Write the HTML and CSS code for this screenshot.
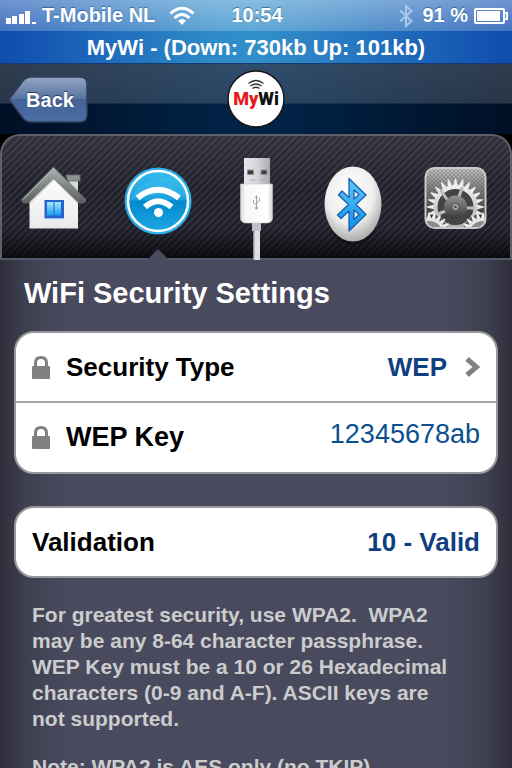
FILE: index.html
```html
<!DOCTYPE html>
<html lang="en">
<head>
<meta charset="utf-8">
<meta name="viewport" content="width=device-width, initial-scale=1">
<title>MyWi</title>
<link rel="stylesheet" href="styles.css">
</head>
<body>
<div class="app">
  <div class="system">
    <div class="status">
      <div class="status-side">
        <svg width="30" height="16" viewBox="0 0 30 16" fill="#fff" aria-hidden="true"><path d="M0 10h5v6H0zM6 8h5v8H6zM13 6h5v10h-5zM19 3h5v13h-5zM26 14h4v2h-4z"/></svg>
        <span>T-Mobile NL</span>
        <svg class="wifi" width="26" height="20" viewBox="0 0 26 20" aria-hidden="true"><g fill="none" stroke="#fff" stroke-width="3"><path d="M1.500 7.500Q13-3 24.500 7.500"/><path d="M5.500 12Q13 5 20.500 12"/></g><path d="M9 14.500q4-3 8 0L13 19z" fill="#fff"/></svg>
      </div>
      <span>10:54</span>
      <div class="status-side status-right">
        <svg class="bt" width="16" height="24" viewBox="0 0 16 24" fill="none" stroke="#a9c8ea" stroke-width="2" aria-hidden="true"><path d="M2 6.500L13.500 17 8 22V2l5.500 5L2 17.500"/></svg>
        <span>91 %</span>
        <svg width="34" height="16" viewBox="0 0 34 16" aria-hidden="true"><rect x="1" y="1" width="29" height="14" rx="1" fill="none" stroke="#fff" stroke-width="2"/><path d="M3 3h23v10H3z" fill="#fff"/><path d="M31 5h2v6h-2" fill="none" stroke="#fff" stroke-width="2"/></svg>
      </div>
    </div>
    <div class="traffic">MyWi - (Down: 730kb Up: 101kb)</div>
  </div>

  <header class="nav">
    <button class="back" type="button">
      <svg class="back-shape" viewBox="0 0 80 47" preserveAspectRatio="none" aria-hidden="true">
        <defs><linearGradient id="backFill" x2="0" y2="1"><stop offset="0" stop-color="#94a5c2"/><stop offset=".48" stop-color="#5874a2"/><stop offset=".5" stop-color="#436296"/><stop offset="1" stop-color="#4b6fa5"/></linearGradient></defs>
        <path d="M1 23.500L15 5Q18.500 1 23 1h49q7 0 7 7v31q0 7-7 7H23q-4.500 0-8-4z" fill="url(#backFill)" stroke="#2e405e" stroke-width="1.500"/>
      </svg>
      <span>Back</span>
    </button>
    <svg class="logo" width="58" height="58" viewBox="0 0 58 58" role="img" aria-label="MyWi">
      <circle cx="29" cy="29" r="28" fill="#fff" stroke="#171717" stroke-width="1.500"/>
      <g fill="none" stroke="#333" stroke-width="1.300"><path d="M21.500 13.500q7.500-6 15 0"/><path d="M23.500 16q5.500-4 11 0"/><path d="M25.500 18.500q3.500-2.500 7 0"/></g>
      <text x="29" y="35" text-anchor="middle" class="logo-text"><tspan fill="#e31b23">My</tspan><tspan fill="#111">Wi</tspan></text>
    </svg>
  </header>

  <nav class="tabs">
    <button class="tab" type="button" aria-label="Home">
      <svg width="68" height="124" viewBox="20 136 68 124">
        <defs>
          <linearGradient id="wall" x2="0" y2="1"><stop offset="0" stop-color="#fff"/><stop offset="1" stop-color="#e9eae9"/></linearGradient>
          <linearGradient id="pane" x2="0" y2="1"><stop offset="0" stop-color="#a6e8ff"/><stop offset="1" stop-color="#159de8"/></linearGradient>
          <linearGradient id="roof" x2="0" y2="1"><stop offset="0" stop-color="#aeb2b0"/><stop offset="1" stop-color="#5b605e"/></linearGradient>
        </defs>
        <path d="M69 179h9v18l-9-9z" fill="#d8dbda"/>
        <path d="M66 175h14v6H68z" fill="#8d9290" stroke="#6d716f"/>
        <path d="M29.500 199L54 174l24 25v29.500H29.500z" fill="url(#wall)"/>
        <path d="M29.500 199L54 176l24 23v5L54 180l-24.500 24z" fill="#b9bbba" opacity=".7"/>
        <path d="M53.500 167L21.500 199.500q0 3.500 3 3.500h3.500L53.500 178 79 203h4q3 0 3-3.500z" fill="url(#roof)" stroke="#5d615f" stroke-width=".8"/>
        <path d="M53.500 168.500L23 199.500" fill="none" stroke="#c2c5c3"/>
        <path d="M44.500 200h19.500v18.500H44.500z" fill="#2862cf"/>
        <path d="M47 202h6.500v13.500H47zM54.500 202h6.500v13.500h-6.500z" fill="url(#pane)"/>
        <path d="M44 219h20.500" stroke="#b8e2f7"/>
      </svg>
    </button>
    <button class="tab tab-active" type="button" aria-label="WiFi" aria-current="page">
      <svg width="68" height="124" viewBox="125 136 68 124">
        <defs><linearGradient id="disc" x2="0" y2="1"><stop offset="0" stop-color="#32bdef"/><stop offset=".48" stop-color="#1a9fdb"/><stop offset=".5" stop-color="#0488cd"/><stop offset="1" stop-color="#1ca9e3"/></linearGradient></defs>
        <circle cx="159" cy="201" r="33.500" fill="#2caee8"/>
        <circle cx="159" cy="201" r="30" fill="url(#disc)" stroke="#fff" stroke-width="2.500"/>
        <path d="M131 199q12-22 44-22 10 5 13 20-26-6-57 2z" fill="#55cdf5" opacity=".25"/>
        <g fill="none" stroke="#fff" stroke-width="6"><path d="M138.500 198q20.500-16.500 41.500 0"/><path d="M146 207q13-11.500 26.500 0"/></g>
        <circle cx="159.500" cy="212.500" r="4.500" fill="#fff"/>
      </svg>
    </button>
    <button class="tab" type="button" aria-label="USB">
      <svg width="36" height="124" viewBox="239 136 36 124">
        <defs><linearGradient id="metal"><stop offset="0" stop-color="#e9e9ec"/><stop offset=".5" stop-color="#d4d4d9"/><stop offset="1" stop-color="#a8a9b2"/></linearGradient><linearGradient id="plug"><stop offset="0" stop-color="#d5d5d8"/><stop offset=".15" stop-color="#f7f7f8"/><stop offset=".85" stop-color="#fff"/><stop offset="1" stop-color="#d2d3d7"/></linearGradient></defs>
        <path d="M244 158h26v28h-26z" fill="url(#metal)"/>
        <path d="M247.500 170h6v4.500h-6zM261 170h6v4.500h-6z" fill="#453c32" stroke="#929298"/>
        <path d="M250 180h5M260 180h5" stroke="#aaaab0"/>
        <path d="M252 222h9v9h-9z" fill="#bfc1c5"/>
        <path d="M253.500 231h6.500v29h-6.500z" fill="#dedfe2"/><path d="M254 231v29" stroke="#9b9da3"/>
        <path d="M240.500 184h32v34q0 5-6 5h-20q-6 0-6-5z" fill="url(#plug)" stroke="#c7c7cb" stroke-width=".6"/>
        <g fill="none" stroke="#a2a3a8"><path d="M256.500 197v11M256.500 205l-3-2v-3M256.500 203l3-2v-3"/></g><circle cx="256.500" cy="208" r="1.500" fill="#a2a3a8"/><path d="M255 198l1.500-3 1.500 3z" fill="#a2a3a8"/>
      </svg>
    </button>
    <button class="tab" type="button" aria-label="Bluetooth">
      <svg width="60" height="124" viewBox="322 136 60 124">
        <defs><radialGradient id="egg" cx=".45" cy=".35" r=".68"><stop offset="0" stop-color="#fff"/><stop offset=".6" stop-color="#eeefee"/><stop offset="1" stop-color="#9fa3a2"/></radialGradient><linearGradient id="rune" x2="0" y2="1"><stop offset="0" stop-color="#62caf8"/><stop offset="1" stop-color="#0d8ee8"/></linearGradient></defs>
        <ellipse cx="352" cy="208" rx="27" ry="37" fill="#08090d" opacity=".4"/>
        <ellipse cx="352" cy="204" rx="28.500" ry="37.500" fill="url(#egg)"/>
        <path fill="url(#rune)" fill-rule="evenodd" stroke="#1b5fae" stroke-width="1.300" stroke-linejoin="round" d="M348 178.500L365 195l-10 9.500 10 10L348 231v-20l-8 7.500-3.500-3.500 11-10.500-10-9.500 3.500-4 7 6.500zM353 190v9l5-4.500zM353 210v9.500l5-5z"/>
      </svg>
    </button>
    <button class="tab" type="button" aria-label="Settings">
      <svg width="64" height="124" viewBox="425 136 64 124">
        <defs>
          <linearGradient id="plate" x2="0" y2="1"><stop offset="0" stop-color="#c8c8c8"/><stop offset=".3" stop-color="#8a8a8a"/><stop offset=".7" stop-color="#4c4c4c"/><stop offset="1" stop-color="#333"/></linearGradient>
          <linearGradient id="steel" gradientUnits="userSpaceOnUse" x1="0" y1="-28" x2="0" y2="28"><stop offset="0" stop-color="#fafafa"/><stop offset="1" stop-color="#a2a2a2"/></linearGradient>
          <linearGradient id="hub" x2="0" y2="1"><stop offset="0" stop-color="#929292"/><stop offset="1" stop-color="#3b3b3b"/></linearGradient>
          <pattern id="mesh" width="4" height="4" patternUnits="userSpaceOnUse"><path d="M0 0h2v2H0zM2 2h2v2H2z" fill="#202020" opacity=".22"/></pattern>
          <clipPath id="face"><rect x="427" y="169" width="59" height="58" rx="8"/></clipPath>
          <path id="tooth" d="M-2.500-21L-.5-28.500H.5L2.500-21z"/>
          <g id="teeth"><use href="#tooth"/><use href="#tooth" transform="rotate(15)"/><use href="#tooth" transform="rotate(30)"/><use href="#tooth" transform="rotate(45)"/><use href="#tooth" transform="rotate(60)"/><use href="#tooth" transform="rotate(75)"/></g>
          <g id="ring"><use href="#teeth"/><use href="#teeth" transform="rotate(90)"/><use href="#teeth" transform="rotate(180)"/><use href="#teeth" transform="rotate(270)"/></g>
        </defs>
        <rect x="426" y="167.500" width="61" height="61" rx="9" fill="url(#plate)"/>
        <g clip-path="url(#face)">
          <path d="M426 167h62v62h-62z" fill="url(#mesh)"/>
          <g transform="translate(456.500 207)">
            <g fill="#ececec"><use href="#ring"/></g>
            <circle r="18" fill="#484848"/><circle r="18" fill="url(#mesh)"/>
            <circle r="20" fill="none" stroke="url(#steel)" stroke-width="4"/>
            <path d="M3-9L7-20M10 1h10M-10 4l-10 4M-8-7l-7-10" stroke="#bbb" stroke-width="3"/>
            <circle r="11.500" fill="url(#hub)"/><circle r="3.500" fill="#aaa" stroke="#555"/><circle r="1.300" fill="#444"/>
          </g>
          <path d="M426 216q14-6 23 12l2 2h11l2-2q9-18 23-12v13h-61z" fill="#3a3a3a" opacity=".75"/>
          <g transform="translate(430 235) scale(.8)" fill="#f2f2f2"><use href="#ring"/><circle r="19.500" fill="#8a8a8a" stroke="#e5e5e5" stroke-width="4"/></g>
          <g transform="translate(484 235) scale(.8)" fill="#f2f2f2"><use href="#ring"/><circle r="19.500" fill="#8a8a8a" stroke="#e5e5e5" stroke-width="4"/></g>
        </g>
        <rect x="426.500" y="168" width="60" height="60" rx="9" fill="none" stroke="#c8c8c8" stroke-width="2"/>
      </svg>
    </button>
  </nav>

  <main class="content">
    <h1>WiFi Security Settings</h1>
    <div class="card">
      <button class="row" type="button">
        <svg class="lock" width="18" height="23" viewBox="0 0 18 23" aria-hidden="true"><path d="M3.500 11V7q0-5.500 5.500-5.500T14.500 7v4" fill="none" stroke="#808080" stroke-width="3"/><rect y="10" width="18" height="13" rx="1" fill="#808080"/></svg>
        <span class="label">Security Type</span>
        <span class="value">WEP</span>
        <svg class="chevron" width="15" height="20" viewBox="0 0 15 20" aria-hidden="true"><path d="M2 2l9.500 8L2 18" fill="none" stroke="#808080" stroke-width="5"/></svg>
      </button>
      <div class="row">
        <svg class="lock" width="18" height="23" viewBox="0 0 18 23" aria-hidden="true"><path d="M3.500 11V7q0-5.500 5.500-5.500T14.500 7v4" fill="none" stroke="#808080" stroke-width="3"/><rect y="10" width="18" height="13" rx="1" fill="#808080"/></svg>
        <label class="label label-key" for="key">WEP Key</label>
        <input class="key" id="key" type="text" value="12345678ab">
      </div>
    </div>
    <div class="card">
      <div class="row">
        <label class="label" for="validation">Validation</label>
        <output class="value" id="validation">10 - Valid</output>
      </div>
    </div>
    <div class="help">
      <p>For greatest security, use WPA2.&nbsp; WPA2<br>may be any 8-64 character passphrase.<br>WEP Key must be a 10 or 26 Hexadecimal<br>characters (0-9 and A-F). ASCII keys are<br>not supported.</p>
      <p>Note: WPA2 is AES only (no TKIP)</p>
    </div>
  </main>
</div>
</body>
</html>
```
FILE: styles.css
```css
* { box-sizing: border-box; }

body {
  margin: 0;
  background: #000;
  color: #fff;
  font-family: "Liberation Sans", Arial, sans-serif;
  font-weight: bold;
}

button {
  margin: 0;
  padding: 0;
  border: 0;
  background: none;
  color: inherit;
  font: inherit;
}

svg { display: block; flex: none; }

.app {
  display: flex;
  flex-direction: column;
  height: 100vh;
  overflow: hidden;
}

/* System bar */
.system {
  flex: none;
  background: linear-gradient(90deg, #0f4cae, #2e8bc8 42%, #318fca 50%, #2e86c6 58%, #0f4cae);
  border-bottom: 1px solid #123a76;
}

.status {
  display: grid;
  grid-template-columns: 1fr auto 1fr;
  align-items: center;
  height: 31px;
  padding: 0 4px 0 6px;
  background: linear-gradient(#ffffff68, #ffffff38);
  font-size: 20px;
  text-shadow: 0 -1px 1px #1c447a99;
}

.status-side { display: flex; align-items: center; gap: 6px; white-space: nowrap; }
.status-right { justify-content: flex-end; }
.wifi { margin-left: 8px; }
.bt { margin-right: 2px; }

.traffic {
  height: 32px;
  font-size: 22px;
  line-height: 34px;
  text-align: center;
}

/* Navigation bar */
.nav {
  display: flex;
  flex: none;
  align-items: center;
  justify-content: center;
  position: relative;
  height: 70px;
  background:
    linear-gradient(#ffffff30, #ffffff28 39px, transparent 40px),
    linear-gradient(90deg, #000f25, #00254a 50%, #000f25);
}

.back {
  position: absolute;
  top: 12px;
  left: 8px;
  width: 80px;
  height: 47px;
  padding-left: 4px;
  font-size: 20px;
  line-height: 42px;
  text-shadow: 0 -1px 1px #23395c;
}

.back-shape { position: absolute; inset: 0; width: 100%; height: 100%; }
.back span { position: relative; }
.logo-text { font: bold 18px Roboto, sans-serif; font-weight: 900; }

/* Tabs */
.tabs {
  display: grid;
  grid-template-columns: 104fr 104fr 94fr 97fr 109fr;
  flex: none;
  height: 126px;
  border: 2px solid #5f6068;
  border-bottom-color: #55576a;
  border-radius: 20px 20px 0 0;
  background:
    linear-gradient(#ffffff14, transparent 45%, #0000 75%, #000000b0),
    repeating-linear-gradient(135deg, #1f202a 0 2px, #31323e 3px 4px, #1f202a 5px);
}

.tab {
  display: flex;
  align-items: flex-start;
  justify-content: center;
  position: relative;
  min-width: 0;
}

.tab-active::after {
  content: "";
  position: absolute;
  bottom: -2px;
  left: 50%;
  width: 26px;
  height: 13px;
  margin-left: -13px;
  background: #4b4b60;
  clip-path: polygon(50% 0, 100% 100%, 0 100%);
}

/* Settings */
.content {
  flex: 1;
  min-height: 0;
  padding: 14px 14px 0;
  overflow-y: auto;
  scrollbar-width: none;
  background: linear-gradient(90deg, #30303c, #3e3f50 5%, #494a5e 13%, #494a5e 87%, #3e3f50 95%, #30303c);
}

h1 {
  margin: 0 0 19px;
  padding-left: 10px;
  font-size: 29px;
  line-height: 38px;
}

.card {
  margin-bottom: 32px;
  overflow: hidden;
  border: 2px solid #98989c;
  border-radius: 20px;
  background: #fff;
}

.row {
  display: flex;
  align-items: center;
  width: 100%;
  height: 68px;
  padding: 0 16px;
  color: #000;
}

.row + .row { height: 71px; border-top: 2px solid #a5a5a5; }
.lock { margin-right: 16px; }
.label { margin-right: auto; font-size: 26px; }
.label-key { font-size: 27px; }
.value { color: #0f3f80; font-size: 26px; }
.chevron { margin-left: 18px; }

.key {
  flex: 1;
  width: 0;
  min-width: 0;
  padding: 0 0 6px;
  border: 0;
  outline: 0;
  background: none;
  color: #0c4f8f;
  font: 27px "Liberation Sans", Arial, sans-serif;
  text-align: right;
}

.help {
  padding: 0 18px;
  margin-top: -8px;
  color: #cccccd;
  font-size: 21px;
  line-height: 26px;
}

.help p { margin: 0 0 22px; white-space: nowrap; }
```
